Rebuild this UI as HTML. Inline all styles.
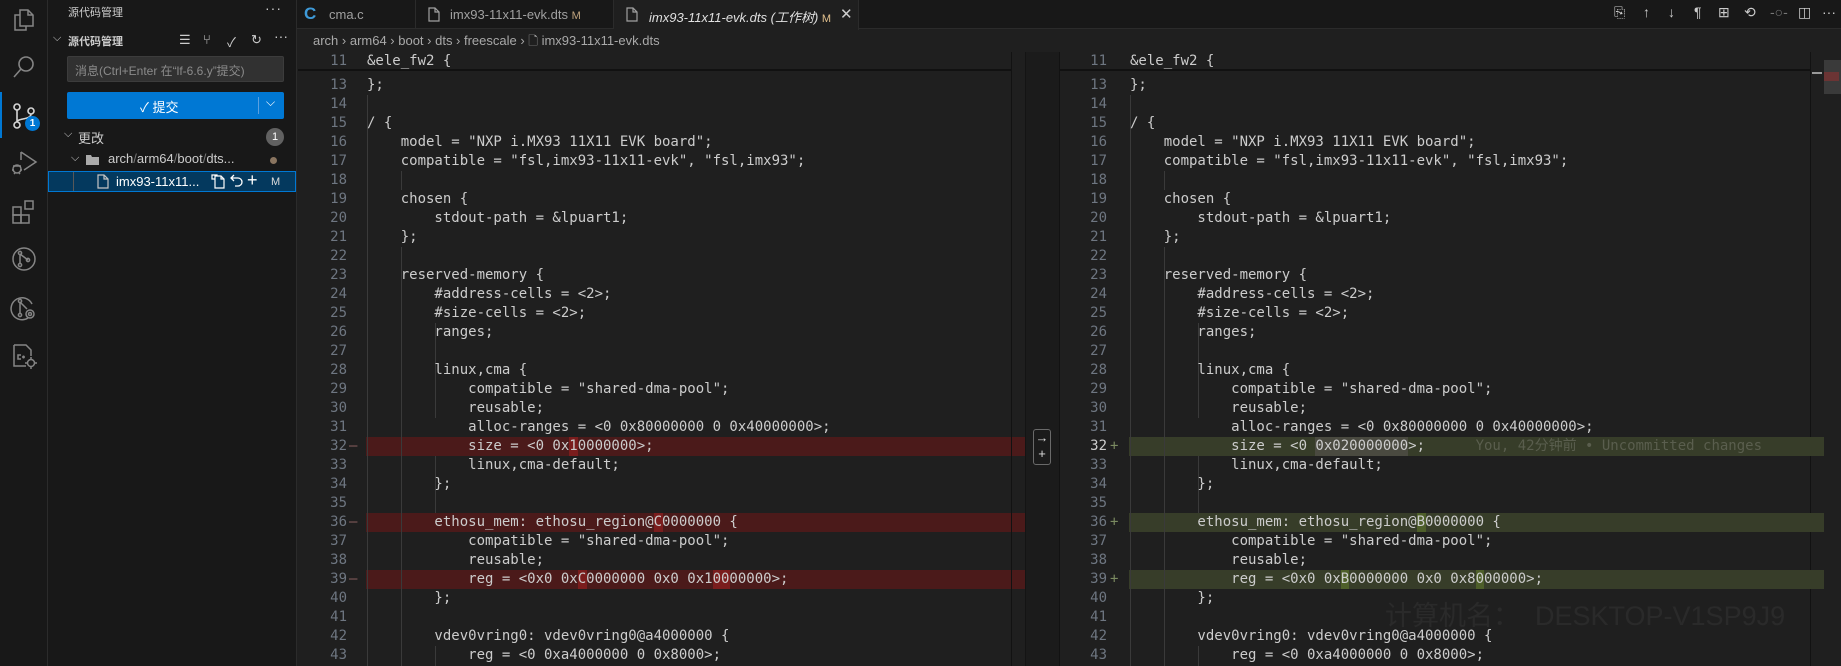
<!DOCTYPE html>
<html><head><meta charset="utf-8"><style>
*{margin:0;padding:0;box-sizing:border-box}
body{width:1841px;height:666px;background:#1f1f1f;overflow:hidden;position:relative;font-family:"Liberation Sans","Noto Sans CJK SC",sans-serif;color:#cccccc}
.a{position:absolute}
.code{font-family:"DejaVu Sans Mono","Liberation Mono",monospace;font-size:14px;white-space:pre;line-height:19px;color:#cccccc}
.ln{font-family:"DejaVu Sans Mono","Liberation Mono",monospace;font-size:14px;line-height:19px;color:#6e7681;text-align:right;width:40px}
.mk{position:absolute;font-family:"DejaVu Sans Mono",monospace;font-size:14px;line-height:19px}
.g{position:absolute;width:1px;background:#3a3a3a}
.del{background:#4b1a1a}
.ins{background:#373d29}
.dc{background:#7a1d1d}
.ic{background:#4e5f2a}
svg{position:absolute}
</style></head><body>
<!-- activity bar -->
<div class="a" style="left:0;top:0;width:48px;height:666px;background:#181818;border-right:1px solid #2b2b2b"></div>
<div class="a" style="left:0;top:92px;width:2px;height:46px;background:#0078d4"></div>
<svg style="left:10px;top:6px" width="28" height="28" viewBox="0 0 28 28" fill="none" stroke="#858585" stroke-width="1.5"><path d="M10 4h8l5 5v11H10z M18 4v5h5 M10 9H5v15h11v-4"/></svg>
<svg style="left:10px;top:53px" width="28" height="28" viewBox="0 0 28 28" fill="none" stroke="#858585" stroke-width="1.6"><circle cx="16" cy="11" r="7"/><path d="M11 16L4 24"/></svg>
<svg style="left:10px;top:102px" width="28" height="28" viewBox="0 0 28 28" fill="none" stroke="#d7d7d7" stroke-width="1.6"><circle cx="7" cy="5" r="3"/><circle cx="7" cy="23" r="3"/><circle cx="21" cy="9" r="3"/><path d="M7 8v12 M21 12c0 6-14 4-14 8"/></svg>
<div class="a" style="left:25px;top:116px;width:15px;height:15px;border-radius:50%;background:#0078d4;color:#fff;font-size:10px;font-weight:bold;text-align:center;line-height:15px">1</div>
<svg style="left:9px;top:148px" width="30" height="30" viewBox="0 0 30 30" fill="none" stroke="#858585" stroke-width="1.5"><path d="M12 4l15 10-12 8 M12 4v8"/><circle cx="8" cy="21" r="4"/><path d="M4 18h8 M3 22h2 M11 22h2 M5 26l1-1 M11 26l-1-1"/></svg>
<svg style="left:9px;top:197px" width="30" height="30" viewBox="0 0 30 30" fill="none" stroke="#858585" stroke-width="1.5"><rect x="4" y="10" width="8" height="8"/><rect x="4" y="18" width="8" height="8"/><rect x="12" y="18" width="8" height="8"/><rect x="16" y="4" width="8" height="8"/></svg>
<svg style="left:9px;top:244px" width="30" height="30" viewBox="0 0 30 30" fill="none" stroke="#858585" stroke-width="1.5"><circle cx="15" cy="15" r="11"/><circle cx="11" cy="9" r="1.6"/><circle cx="11" cy="21" r="1.6"/><circle cx="19" cy="16" r="1.6"/><path d="M11 10v10 M11 10l8 6"/></svg>
<svg style="left:9px;top:293px" width="30" height="30" viewBox="0 0 30 30" fill="none" stroke="#858585" stroke-width="1.5"><path d="M23 11a11 11 0 1 0-4 14"/><circle cx="11" cy="8" r="1.6"/><circle cx="11" cy="22" r="1.6"/><path d="M11 9v12 M11 9l7 7"/><circle cx="21" cy="21" r="4"/><circle cx="21" cy="21" r="1.5"/></svg>
<svg style="left:9px;top:341px" width="30" height="30" viewBox="0 0 30 30" fill="none" stroke="#858585" stroke-width="1.5"><path d="M5 4h12l5 5v6 M5 4v21h12"/><path d="M12 14h-3v4h3 M13 16h3 M14.5 14.5v3"/><circle cx="22" cy="22" r="3.5"/><path d="M22 16v2 M22 26v2 M16 22h2 M26 22h2"/></svg>
<!-- side panel -->
<div class="a" style="left:48px;top:0;width:249px;height:666px;background:#181818;border-right:1px solid #2b2b2b"></div>
<div class="a" style="left:68px;top:4px;font-size:11px;color:#cccccc">源代码管理</div>
<div class="a" style="left:265px;top:0px;font-size:14px;color:#cccccc;letter-spacing:1px">···</div>
<div class="a" style="left:53px;top:32px;font-size:11px;color:#cccccc">⌵</div>
<div class="a" style="left:68px;top:33px;font-size:11px;font-weight:bold;color:#cccccc">源代码管理</div>
<div class="a" style="left:179px;top:32px;font-size:13px;color:#cccccc">☰</div>
<div class="a" style="left:203px;top:32px;font-size:13px;color:#cccccc">⑂</div>
<div class="a" style="left:227px;top:32px;font-size:13px;color:#cccccc">✓</div>
<div class="a" style="left:251px;top:32px;font-size:13px;color:#cccccc">↻</div>
<div class="a" style="left:274px;top:28px;font-size:14px;color:#cccccc">···</div>
<div class="a" style="left:67px;top:56px;width:217px;height:26px;background:#313131;border:1px solid #3c3c3c;border-radius:2px;font-size:12px;color:#8b8b8b;padding:5px 0 0 7px">消息(Ctrl+Enter 在“lf-6.6.y”提交)</div>
<div class="a" style="left:67px;top:92px;width:217px;height:27px;background:#0078d4;border-radius:2px"></div>
<div class="a" style="left:140px;top:97px;font-size:13px;color:#fff">✓ 提交</div>
<div class="a" style="left:258px;top:97px;width:1px;height:17px;background:#5aa0e0"></div>
<div class="a" style="left:266px;top:95px;font-size:12px;color:#fff">⌵</div>
<div class="a" style="left:64px;top:128px;font-size:11px;color:#cccccc">⌵</div>
<div class="a" style="left:78px;top:128px;font-size:13px;color:#cccccc">更改</div>
<div class="a" style="left:266px;top:128px;width:18px;height:18px;border-radius:50%;background:#616161;color:#fff;font-size:11px;text-align:center;line-height:18px">1</div>
<div class="a" style="left:71px;top:152px;font-size:11px;color:#cccccc">⌵</div>
<svg style="left:86px;top:154px" width="14" height="12" viewBox="0 0 14 12"><path d="M0 1h5l1 2h7v8H0z" fill="#aaaaaa"/></svg>
<div class="a" style="left:108px;top:151px;font-size:13px;color:#cccccc">arch<span style="color:#777">/</span>arm64<span style="color:#777">/</span>boot<span style="color:#777">/</span>dts...</div>
<div class="a" style="left:270px;top:157px;width:7px;height:7px;border-radius:50%;background:#8a7560"></div>
<div class="a" style="left:48px;top:171px;width:248px;height:21px;background:#04395e;border:1px solid #0078d4"></div>
<div class="a" style="left:73px;top:172px;width:1px;height:19px;background:#585858"></div>
<svg style="left:97px;top:174px" width="12" height="15" viewBox="0 0 12 15" fill="none" stroke="#c5c5c5" stroke-width="1.2"><path d="M1 1h6l4 4v9H1z M7 1v4h4"/></svg>
<div class="a" style="left:116px;top:174px;font-size:13px;color:#ffffff">imx93-11x11...</div>
<svg style="left:210px;top:173px" width="16" height="16" viewBox="0 0 16 16" fill="none" stroke="#fff" stroke-width="1.2"><path d="M5 3h6l3 3v9H5z M11 3v3h3 M5 6H2V2h5v1"/></svg>
<svg style="left:230px;top:173px" width="14" height="16" viewBox="0 0 14 16" fill="none" stroke="#fff" stroke-width="1.3"><path d="M4 2L1 5l3 3 M1 5h7a4 4 0 0 1 0 8H5"/></svg>
<div class="a" style="left:247px;top:170px;font-size:18px;color:#fff">+</div>
<div class="a" style="left:271px;top:176px;font-size:11px;color:#dcdcdc">M</div>
<!-- tab bar -->
<div class="a" style="left:297px;top:0;width:1544px;height:29px;background:#181818;border-bottom:1px solid #2b2b2b"></div>
<div class="a" style="left:297px;top:0;width:119px;height:29px;border-right:1px solid #2b2b2b"></div>
<div class="a" style="left:304px;top:4px;font-size:17px;font-weight:bold;color:#3e9ad8">C</div>
<div class="a" style="left:329px;top:7px;font-size:13px;color:#a0a0a0">cma.c</div>
<div class="a" style="left:416px;top:0;width:198px;height:29px;border-right:1px solid #2b2b2b"></div>
<svg style="left:428px;top:7px" width="12" height="15" viewBox="0 0 12 15" fill="none" stroke="#a0a0a0" stroke-width="1.2"><path d="M1 1h6l4 4v9H1z M7 1v4h4"/></svg>
<div class="a" style="left:450px;top:7px;font-size:13px;color:#a0a0a0">imx93-11x11-evk.dts <span style="font-size:11px;color:#c0a47e">M</span></div>
<div class="a" style="left:614px;top:0;width:245px;height:30px;background:#1f1f1f;border-right:1px solid #2b2b2b"></div>
<svg style="left:626px;top:7px" width="12" height="15" viewBox="0 0 12 15" fill="none" stroke="#a0a0a0" stroke-width="1.2"><path d="M1 1h6l4 4v9H1z M7 1v4h4"/></svg>
<div class="a" style="left:649px;top:7px;font-size:13px;color:#e0e0e0;font-style:italic">imx93-11x11-evk.dts (工作树) <span style="font-size:11px;color:#e2c08d;font-style:normal">M</span></div>
<div class="a" style="left:840px;top:5px;font-size:15px;color:#cccccc">✕</div>
<div class="a" style="left:1614px;top:4px;font-size:14px;color:#cccccc;word-spacing:0">
<span class="a" style="left:0">⎘</span><span class="a" style="left:29px">↑</span><span class="a" style="left:54px">↓</span><span class="a" style="left:80px">¶</span><span class="a" style="left:104px">⊞</span><span class="a" style="left:130px">⟲</span><span class="a" style="left:156px;color:#777">-○-</span><span class="a" style="left:184px">◫</span><span class="a" style="left:208px">···</span></div>
<!-- breadcrumb -->
<div class="a" style="left:313px;top:32px;font-size:13px;color:#a9a9a9">arch › arm64 › boot › dts › freescale › <span style="font-size:12px">🗋</span> imx93-11x11-evk.dts</div>

<!-- middle column -->
<div class="a" style="left:1025px;top:52px;width:34px;height:614px;background:#1b1b1b;border-left:1px solid #141414"></div>
<div class="a" style="left:1033px;top:429px;width:18px;height:36px;border:1px solid #6a6a6a;border-radius:3px;color:#dddddd;font-size:13px;line-height:16px;text-align:center">→<br>+</div>
<div class="a" style="left:1059px;top:52px;width:1px;height:614px;background:#121212"></div>
<div class="a" style="left:1810px;top:52px;width:1px;height:614px;background:#121212"></div>
<div class="a" style="left:1824px;top:60px;width:17px;height:34px;background:#3a3a3a"></div>
<div class="a" style="left:1824px;top:72px;width:15px;height:9px;background:#6b3434"></div>
<div class="a" style="left:1812px;top:72px;width:10px;height:2px;background:#999"></div>

<!-- LEFT EDITOR bands -->
<div class="a del" style="left:366px;top:437px;width:659px;height:19px"></div>
<div class="a del" style="left:366px;top:513px;width:659px;height:19px"></div>
<div class="a del" style="left:366px;top:570px;width:659px;height:19px"></div>
<div class="a" style="left:1011px;top:52px;width:1px;height:614px;background:#121212"></div>
<div class="a dc" style="left:569px;top:437px;width:9px;height:19px"></div>
<div class="a dc" style="left:654px;top:513px;width:9px;height:19px"></div>
<div class="a dc" style="left:578px;top:570px;width:9px;height:19px"></div>
<div class="a dc" style="left:713px;top:570px;width:17px;height:19px"></div>
<div class="mk" style="left:349px;top:437px;color:#8b6060">—</div>
<div class="mk" style="left:349px;top:513px;color:#8b6060">—</div>
<div class="mk" style="left:349px;top:570px;color:#8b6060">—</div>

<!-- RIGHT EDITOR bands -->
<div class="a ins" style="left:1129px;top:437px;width:695px;height:19px"></div>
<div class="a ins" style="left:1129px;top:513px;width:695px;height:19px"></div>
<div class="a ins" style="left:1129px;top:570px;width:695px;height:19px"></div>
<div class="a" style="left:1315px;top:437px;width:93px;height:19px;background:#4a4a40"></div>
<div class="a ic" style="left:1417px;top:513px;width:9px;height:19px"></div>
<div class="a ic" style="left:1341px;top:570px;width:8px;height:19px"></div>
<div class="a ic" style="left:1476px;top:570px;width:8px;height:19px"></div>
<div class="mk" style="left:1110px;top:437px;color:#7a8a60">+</div>
<div class="mk" style="left:1110px;top:513px;color:#7a8a60">+</div>
<div class="mk" style="left:1110px;top:570px;color:#7a8a60">+</div>

<!-- indent guides -->
<div class="g" style="left:367px;top:95px;height:571px"></div>
<div class="g" style="left:401px;top:171px;height:19px"></div>
<div class="g" style="left:401px;top:247px;height:419px"></div>
<div class="g" style="left:435px;top:323px;height:95px"></div>
<div class="g" style="left:435px;top:456px;height:57px"></div>
<div class="g" style="left:435px;top:646px;height:20px"></div>
<div class="g" style="left:1130px;top:95px;height:571px"></div>
<div class="g" style="left:1164px;top:171px;height:19px"></div>
<div class="g" style="left:1164px;top:247px;height:419px"></div>
<div class="g" style="left:1198px;top:323px;height:95px"></div>
<div class="g" style="left:1198px;top:456px;height:57px"></div>
<div class="g" style="left:1198px;top:646px;height:20px"></div>

<div class="a ln" style="left:307px;top:76px">13<br>14<br>15<br>16<br>17<br>18<br>19<br>20<br>21<br>22<br>23<br>24<br>25<br>26<br>27<br>28<br>29<br>30<br>31<br>32<br>33<br>34<br>35<br>36<br>37<br>38<br>39<br>40<br>41<br>42<br>43</div>
<div class="a code" style="left:367px;top:76px">};

/ {
    model = "NXP i.MX93 11X11 EVK board";
    compatible = "fsl,imx93-11x11-evk", "fsl,imx93";

    chosen {
        stdout-path = &amp;lpuart1;
    };

    reserved-memory {
        #address-cells = &lt;2&gt;;
        #size-cells = &lt;2&gt;;
        ranges;

        linux,cma {
            compatible = "shared-dma-pool";
            reusable;
            alloc-ranges = &lt;0 0x80000000 0 0x40000000&gt;;
            size = &lt;0 0x10000000&gt;;
            linux,cma-default;
        };

        ethosu_mem: ethosu_region@C0000000 {
            compatible = "shared-dma-pool";
            reusable;
            reg = &lt;0x0 0xC0000000 0x0 0x10000000&gt;;
        };

        vdev0vring0: vdev0vring0@a4000000 {
            reg = &lt;0 0xa4000000 0 0x8000&gt;;</div>

<div class="a ln" style="left:1067px;top:76px">13<br>14<br>15<br>16<br>17<br>18<br>19<br>20<br>21<br>22<br>23<br>24<br>25<br>26<br>27<br>28<br>29<br>30<br>31<br><span style="color:#cccccc">32</span><br>33<br>34<br>35<br>36<br>37<br>38<br>39<br>40<br>41<br>42<br>43</div>
<div class="a code" style="left:1130px;top:76px">};

/ {
    model = "NXP i.MX93 11X11 EVK board";
    compatible = "fsl,imx93-11x11-evk", "fsl,imx93";

    chosen {
        stdout-path = &amp;lpuart1;
    };

    reserved-memory {
        #address-cells = &lt;2&gt;;
        #size-cells = &lt;2&gt;;
        ranges;

        linux,cma {
            compatible = "shared-dma-pool";
            reusable;
            alloc-ranges = &lt;0 0x80000000 0 0x40000000&gt;;
            size = &lt;0 0x020000000&gt;;      <span style="color:#5a5e4e">You, 42分钟前 • Uncommitted changes</span>
            linux,cma-default;
        };

        ethosu_mem: ethosu_region@B0000000 {
            compatible = "shared-dma-pool";
            reusable;
            reg = &lt;0x0 0xB0000000 0x0 0x8000000&gt;;
        };

        vdev0vring0: vdev0vring0@a4000000 {
            reg = &lt;0 0xa4000000 0 0x8000&gt;;</div>

<!-- sticky scroll -->
<div class="a" style="left:298px;top:52px;width:713px;height:19px;background:#1f1f1f;border-bottom:2px solid #111"></div>
<div class="a ln" style="left:307px;top:52px">11</div>
<div class="a code" style="left:367px;top:52px">&amp;ele_fw2 {</div>
<div class="a" style="left:1060px;top:52px;width:750px;height:19px;background:#1f1f1f;border-bottom:2px solid #111"></div>
<div class="a ln" style="left:1067px;top:52px">11</div>
<div class="a code" style="left:1130px;top:52px">&amp;ele_fw2 {</div>

<div class="a" style="left:1385px;top:594px;font-size:27px;color:rgba(255,255,255,0.05);white-space:pre">计算机名：  DESKTOP-V1SP9J9</div>
</body></html>
